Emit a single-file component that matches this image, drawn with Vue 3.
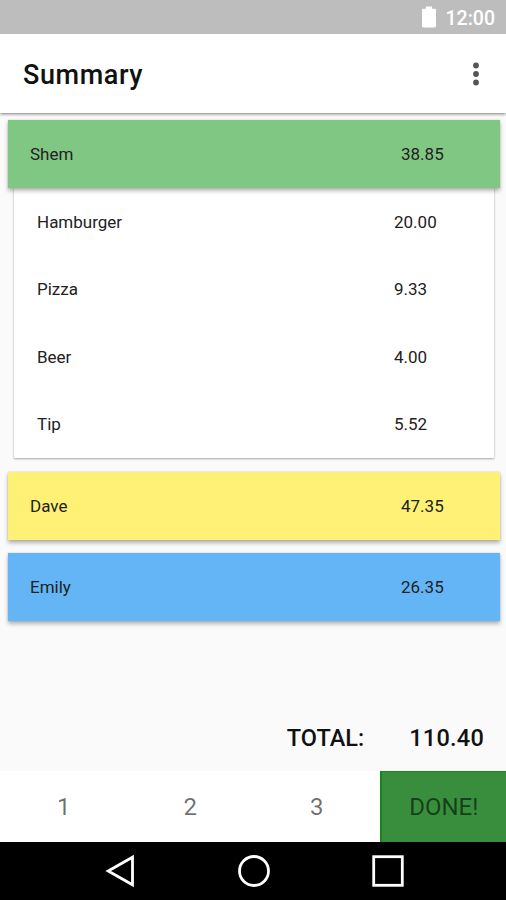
<template>
  <div class="screen">
    <div class="status-bar">
      <svg class="battery" width="14" height="22" viewBox="0 0 14 22">
        <path d="M4 0.500h6v2.200h2.600c.8 0 1.400.6 1.400 1.400v16c0 .8-.6 1.400-1.400 1.400H1.400C.6 21.500 0 20.900 0 20.100v-16c0-.8.6-1.400 1.400-1.400H4z" fill="#fff" />
      </svg>
      <span class="clock">12:00</span>
    </div>

    <header class="toolbar">
      <h1>Summary</h1>
      <button class="menu-btn" aria-label="Menu">
        <svg width="8" height="24" viewBox="0 0 8 24" fill="#555">
          <circle cx="4" cy="3.500" r="2.900" />
          <circle cx="4" cy="12" r="2.900" />
          <circle cx="4" cy="20.500" r="2.900" />
        </svg>
      </button>
    </header>

    <main class="content">
      <div v-for="person in people" :key="person.name" class="person">
        <div class="person-row" :class="person.color">
          <span class="label">{{ person.name }}</span>
          <span class="amount">{{ person.total }}</span>
        </div>
        <div v-if="person.items.length" class="items">
          <div v-for="item in person.items" :key="item.name" class="item-row">
            <span class="label">{{ item.name }}</span>
            <span class="amount">{{ item.price }}</span>
          </div>
        </div>
      </div>
      <div class="total">
        <span class="total-label">TOTAL:</span>
        <span class="total-value">110.40</span>
      </div>
    </main>

    <div class="steps">
      <button v-for="step in 3" :key="step" class="step">{{ step }}</button>
      <button class="step done">DONE!</button>
    </div>

    <nav class="nav-bar">
      <svg width="34" height="34" viewBox="0 0 34 34">
        <path d="M29.500 3.200v27.600L5.200 17z" />
      </svg>
      <svg width="34" height="34" viewBox="0 0 34 34">
        <circle cx="17" cy="17" r="14.500" />
      </svg>
      <svg width="34" height="34" viewBox="0 0 34 34">
        <rect x="2.700" y="2.700" width="28.600" height="28.600" />
      </svg>
    </nav>
  </div>
</template>

<script setup>
import { ref } from 'vue';

const people = ref([
  {
    name: 'Shem',
    total: '38.85',
    color: 'green',
    items: [
      { name: 'Hamburger', price: '20.00' },
      { name: 'Pizza', price: '9.33' },
      { name: 'Beer', price: '4.00' },
      { name: 'Tip', price: '5.52' }
    ]
  },
  { name: 'Dave', total: '47.35', color: 'yellow', items: [] },
  { name: 'Emily', total: '26.35', color: 'blue', items: [] }
])
</script>

<style>
body {
  margin: 0;
}
</style>

<style scoped>
.screen {
  width: 100%;
  height: 100vh;
  display: flex;
  flex-direction: column;
  overflow: hidden;
  background-color: #fafafa;
  color: #212121;
  font-family: Roboto, "Liberation Sans", sans-serif;
}

button {
  padding: 0;
  border: none;
  background: none;
  font-family: inherit;
}

.status-bar {
  height: 34px;
  flex: none;
  display: flex;
  align-items: center;
  justify-content: flex-end;
  box-sizing: border-box;
  padding: 2px 11px 0 0;
  background-color: #bdbdbd;
  color: #fff;
}

.battery {
  margin: 0 10px 2px 0;
}

.clock {
  font-size: 19.500px;
  font-weight: 500;
}

.toolbar {
  position: relative;
  z-index: 1;
  height: 79px;
  flex: none;
  display: flex;
  align-items: center;
  justify-content: space-between;
  box-sizing: border-box;
  padding: 2px 26px 0 23px;
  background-color: #fff;
  box-shadow: 0 1px 3px rgba(0, 0, 0, 0.5);
  clip-path: inset(0 0 -6px 0);
}

h1 {
  margin: 0;
  color: #111;
  font-size: 27px;
  font-weight: 500;
  letter-spacing: 0.600px;
}

.menu-btn {
  display: flex;
  margin-bottom: 2px;
}

.content {
  flex: 1;
  display: flex;
  flex-direction: column;
  padding: 7px 6px 0 7.500px;
}

.person {
  margin-bottom: 13.500px;
}

.person-row {
  position: relative;
  height: 68px;
  display: flex;
  align-items: center;
  padding: 0 56px 0 22.500px;
  box-shadow: 0 3px 4px rgba(0, 0, 0, 0.28), 0 0 2px rgba(0, 0, 0, 0.15);
}

.green {
  background-color: #81c784;
}

.yellow {
  background-color: #fff176;
}

.blue {
  background-color: #64b5f6;
}

.items {
  margin: 0 6.500px;
  background-color: #fff;
  box-shadow: 0 1px 2px rgba(0, 0, 0, 0.35);
}

.item-row {
  height: 67.500px;
  display: flex;
  align-items: center;
  padding: 0 56.500px 0 23px;
}

.label {
  flex: 1;
  font-size: 17px;
}

.amount {
  width: 43px;
  font-size: 17px;
}

.total {
  display: flex;
  justify-content: flex-end;
  margin: auto 16px 18px 0;
  color: #111;
  font-size: 23.500px;
  font-weight: 500;
  line-height: 30px;
}

.total-value {
  margin-left: 45px;
  letter-spacing: 0.250px;
}

.steps {
  height: 71px;
  flex: none;
  display: grid;
  grid-template-columns: 1fr 1fr 1fr 1fr;
  background-color: #fff;
}

.step {
  padding-left: 1px;
  color: rgba(0, 0, 0, 0.56);
  font-size: 24px;
}

.done {
  padding-left: 0;
  border-left: 2px solid #1a841c;
  border-top: 1px solid #1a841c;
  background-color: #388e3c;
}

.nav-bar {
  height: 58px;
  flex: none;
  display: flex;
  align-items: center;
  justify-content: center;
  gap: 100px;
  padding-left: 1px;
  background-color: #000;
}

.nav-bar svg {
  fill: none;
  stroke: #fff;
  stroke-width: 2.800;
}
</style>
